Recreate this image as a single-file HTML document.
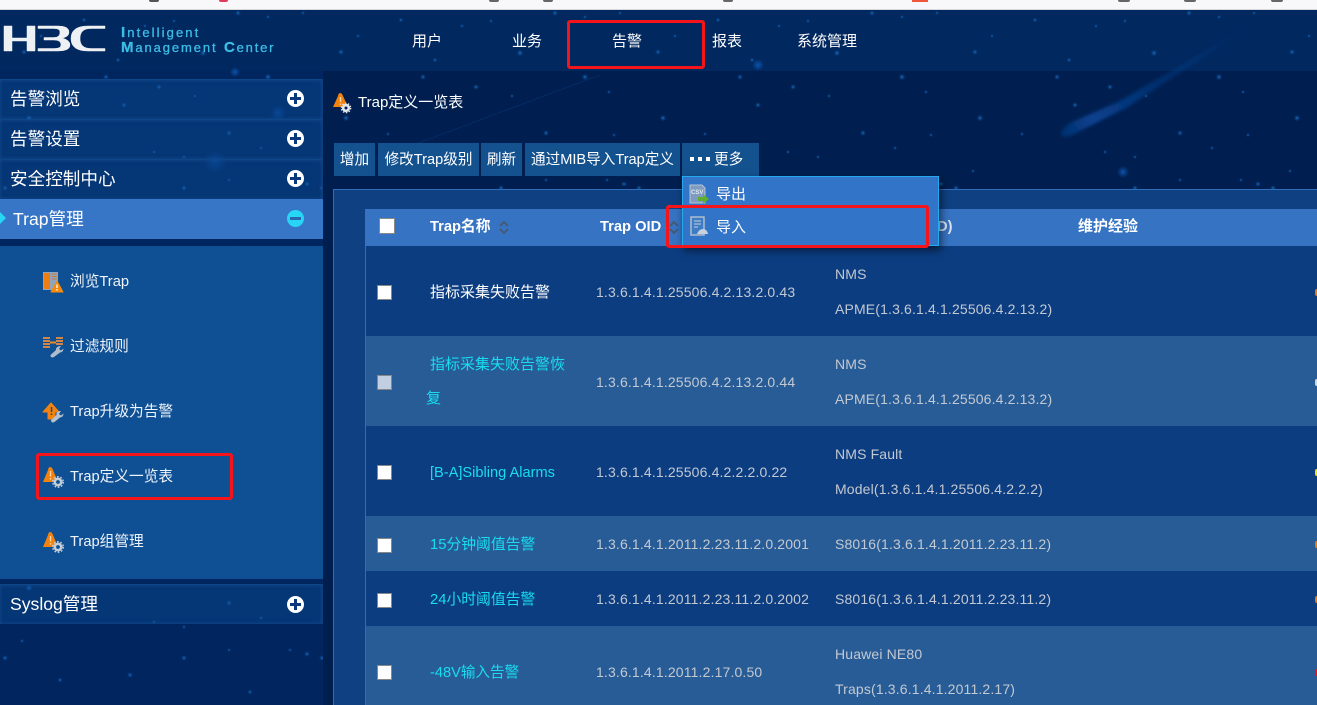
<!DOCTYPE html>
<html lang="zh"><head><meta charset="utf-8"><title>Trap定义一览表</title>
<style>
*{box-sizing:border-box}
html,body{margin:0;padding:0;width:1317px;height:705px;overflow:hidden;background:#001f50}
body{position:relative;font-family:"Liberation Sans","Noto Sans CJK SC",sans-serif;color:#fff}
.a{position:absolute}
.t{position:absolute;white-space:nowrap;line-height:20px}
.sec{position:absolute;left:0;width:323px;height:40px;background:rgba(15,85,160,.34);border-top:1px solid #0d4689;border-right:1px solid #0b3f80;box-shadow:inset 0 0 4px rgba(50,120,200,.3)}
.sec span{position:absolute;left:10px;top:9px;font-size:17.6px;line-height:20px;color:#fff}
.pm{position:absolute;left:287px;width:17px;height:17px;border-radius:50%;background:#fff}
.pm:before{content:"";position:absolute;left:3px;top:7px;width:11px;height:3px;background:#0b3a7c}
.pm:after{content:"";position:absolute;left:7px;top:3px;width:3px;height:11px;background:#0b3a7c}
.nav{position:absolute;top:32px;font-size:15px;line-height:20px;color:#fff;margin-top:-1px;padding-top:1px}
.sub{position:absolute;left:70px;font-size:14.7px;line-height:20px;color:#eef4fb;white-space:nowrap}
.ic{position:absolute;left:42px;width:22px;height:22px;overflow:visible}
.btn{position:absolute;top:143px;height:33px;background:#14528f;font-size:14.6px;line-height:35px;text-align:center;color:#fff;white-space:nowrap}
.row{position:absolute;left:365px;width:952px}
.d{background:#0c3d80}.l{background:#285c96}
.cb{position:absolute;left:12px;width:15px;height:15px;background:#fff;border:1px solid #888}
.c{position:absolute;font-size:14px;line-height:20px;white-space:nowrap}
.oid{left:231px;color:#c3c9d2;letter-spacing:.15px}
.dev{left:470px;color:#c3c9d2;letter-spacing:.15px}
.nm{left:65px;color:#19dcf0;font-size:14.8px}
.mark{position:absolute;left:950px;width:2px;height:7px;border-radius:2px 0 0 2px}
.rb{position:absolute;border:3px solid #f5141a;border-radius:3px}
.lg{position:absolute;white-space:nowrap;font-size:13px;line-height:16px;color:#3cbde6;-webkit-text-stroke:.3px #3cbde6}
</style></head><body>

<svg class="a" style="left:0;top:0" width="1317" height="705">
<defs>
<radialGradient id="g"><stop offset="0" stop-color="#2f8fe8" stop-opacity=".75"/><stop offset=".45" stop-color="#1469c0" stop-opacity=".35"/><stop offset="1" stop-color="#1469c0" stop-opacity="0"/></radialGradient>
<radialGradient id="gc"><stop offset="0" stop-color="#0f5fc0" stop-opacity=".8"/><stop offset="1" stop-color="#0f5fc0" stop-opacity="0"/></radialGradient>
<linearGradient id="m" gradientUnits="userSpaceOnUse" x1="1253" y1="23" x2="1063" y2="135"><stop offset="0" stop-color="#0b4aa0" stop-opacity="0"/><stop offset=".5" stop-color="#0b4aa0" stop-opacity=".35"/><stop offset=".85" stop-color="#0c50aa" stop-opacity=".7"/><stop offset="1" stop-color="#0c4a9e" stop-opacity=".4"/></linearGradient>
<filter id="bl" x="-10%" y="-20%" width="120%" height="140%"><feGaussianBlur stdDeviation="1.500"/></filter>
<pattern id="s" width="317" height="235" patternUnits="userSpaceOnUse">
<g fill="url(#g)">
<circle cx="24" cy="52" r="3"/><circle cx="84" cy="20" r="2.5"/><circle cx="41" cy="36" r="2"/><circle cx="118" cy="60" r="2.5"/><circle cx="145" cy="26" r="2"/><circle cx="174" cy="21" r="2"/><circle cx="238" cy="13" r="3"/><circle cx="203" cy="53" r="3.5"/><circle cx="268" cy="17" r="2"/><circle cx="303" cy="13" r="2"/><circle cx="106" cy="77" r="3"/><circle cx="159" cy="87" r="3"/><circle cx="29" cy="118" r="3.5"/><circle cx="71" cy="134" r="2"/><circle cx="124" cy="105" r="3"/><circle cx="195" cy="96" r="2"/><circle cx="229" cy="133" r="3"/><circle cx="268" cy="77" r="3.5"/><circle cx="292" cy="92" r="2"/><circle cx="261" cy="148" r="2"/><circle cx="297" cy="135" r="2"/><circle cx="154" cy="152" r="2"/><circle cx="184" cy="157" r="2"/><circle cx="22" cy="171" r="2"/><circle cx="229" cy="180" r="2"/><circle cx="290" cy="180" r="2"/><circle cx="5" cy="188" r="3"/><circle cx="184" cy="188" r="3"/><circle cx="307" cy="184" r="3"/><circle cx="60" cy="210" r="2.5"/><circle cx="130" cy="205" r="3"/><circle cx="250" cy="222" r="2.5"/>
</g></pattern>
</defs>
<rect x="0" y="10" width="1317" height="61" fill="#01285f"/>
<rect x="0" y="71" width="1317" height="634" fill="#001f50"/>
<rect x="0" y="71" width="323" height="634" fill="#01265f"/>
<rect x="0" y="10" width="1317" height="695" fill="url(#s)"/>
<circle cx="1123" cy="172" r="6" fill="url(#gc)"/><circle cx="758" cy="65" r="6" fill="url(#gc)"/><circle cx="235" cy="72" r="5" fill="url(#gc)"/><circle cx="215" cy="162" r="12" fill="url(#gc)" opacity=".5"/><circle cx="278" cy="113" r="8" fill="url(#gc)" opacity=".6"/>
<path d="M1061 134 Q1062 128 1072 122 L1120 101 L1203 52 L1253 23 L1206 56 L1126 108 L1080 131 Q1064 141 1061 134Z" fill="url(#m)" filter="url(#bl)"/>
<path d="M333 175 L600 75" stroke="#0a3c80" stroke-width="1" opacity=".4"/>
</svg>

<div class="a" style="left:0;top:0;width:1317px;height:10px;background:#f8f8fa;border-bottom:1px solid #d8d8dc"></div>
<div class="a" style="left:149px;top:0;width:10px;height:2px;background:#555;border-radius:0 0 5px 5px"></div>
<div class="a" style="left:219px;top:0;width:9px;height:2px;background:#e23a5c;border-radius:0 0 5px 5px"></div>
<div class="a" style="left:489px;top:0;width:10px;height:2px;background:#666;border-radius:0 0 5px 5px"></div>
<div class="a" style="left:543px;top:0;width:10px;height:2px;background:#666;border-radius:0 0 5px 5px"></div>
<div class="a" style="left:723px;top:0;width:10px;height:2px;background:#666;border-radius:0 0 5px 5px"></div>
<div class="a" style="left:912px;top:0;width:16px;height:2px;background:#f0563a"></div>
<div class="a" style="left:1118px;top:0;width:12px;height:2px;background:#666;border-radius:0 0 5px 5px"></div>
<div class="a" style="left:1184px;top:0;width:12px;height:2px;background:#666;border-radius:0 0 5px 5px"></div>
<div class="a" style="left:1271px;top:0;width:12px;height:2px;background:#666;border-radius:0 0 5px 5px"></div>

<!-- logo -->
<svg class="a" style="left:0;top:18px" width="110" height="40" fill="#eef1f4" stroke="#eef1f4" stroke-width=".5">
<path d="M4 8H12V20H27V8H35V33H27V23H12V33H4Z"/>
<path d="M38 8H58Q69 8 69 14Q69 19 62 20Q70 22 70 27Q70 33 58 33H38V30.500H54Q61 30.500 61 27Q61 22 54 22H44V19.500H54Q60 19.500 60 14Q60 10.500 54 10.500H38Z"/>
<path d="M105 8H88Q71 8 71 20.500Q71 33 88 33H105V30.500H91Q80 30.500 80 20.500Q80 10.500 91 10.500H105Z"/>
</svg>
<div class="lg" style="left:121px;top:25px;letter-spacing:2.1px"><b style="font-size:15px">I</b>ntelligent</div>
<div class="lg" style="left:121px;top:40px;letter-spacing:1.9px"><b style="font-size:15px">M</b>anagement</div>
<div class="lg" style="left:224px;top:40px;letter-spacing:1.8px"><b style="font-size:15px">C</b>enter</div>

<!-- nav -->
<div class="nav" style="left:412px">用户</div>
<div class="nav" style="left:512px">业务</div>
<div class="nav" style="left:612px">告警</div>
<div class="nav" style="left:712px">报表</div>
<div class="nav" style="left:797px">系统管理</div>
<div class="rb" style="left:567px;top:20px;width:138px;height:49px"></div>

<!-- sidebar -->
<div class="a" style="left:323px;top:71px;width:10px;height:634px;background:#001e4e"></div>
<div class="sec" style="top:79px"><span>告警浏览</span><i class="pm" style="top:10px"></i></div>
<div class="sec" style="top:119px"><span>告警设置</span><i class="pm" style="top:10px"></i></div>
<div class="sec" style="top:159px"><span>安全控制中心</span><i class="pm" style="top:10px"></i></div>
<div class="a" style="left:0;top:199px;width:323px;height:40px;background:#3776c7"></div>
<div class="a" style="left:0;top:212px;width:0;height:0;border-left:6px solid #25d7f5;border-top:6px solid transparent;border-bottom:6px solid transparent"></div>
<div class="t" style="left:13px;top:209px;font-size:17.6px">Trap管理</div>
<i class="a" style="left:287px;top:210px;width:17px;height:17px;border-radius:50%;background:#27d6f6"></i>
<i class="a" style="left:290px;top:217px;width:11px;height:3px;background:#2a68ae"></i>

<div class="a" style="left:0;top:246px;width:323px;height:333px;background:#0f4f94"></div>
<div class="sec" style="top:584px"><span>Syslog管理</span><i class="pm" style="top:11px"></i></div>

<svg class="ic" style="top:270px" viewBox="0 0 22 22"><path d="M1 2H16V20H1Z" fill="#8fa5bf"/><path d="M2 3H8V19H2Z" fill="#f07d12"/><path d="M9.500 4H15M9.500 6.500H15M9.500 9H15" stroke="#c9803e"/><path d="M15 11L21 22H9Z" fill="#f58a0c" stroke="#f58a0c" stroke-linejoin="round"/><path d="M15 14.500V18M15 19V20.500" stroke="#fff" stroke-width="1.300"/></svg>
<svg class="ic" style="top:335px" viewBox="0 0 22 22"><path d="M1 3H8M1 6H8M1 9H8M1 12H8M14 3H21M14 6H21M14 9H21" stroke="#cf8648" stroke-width="2"/><path d="M8 7.500H14" stroke="#f08a20" stroke-width="2"/><path d="M19 11L17 14L19 15.500L21.500 13.500Q21.500 17 18 17.500L12 22Q8.500 23.500 8.500 20L14 15Q14 11 19 11Z" fill="#aebccb"/></svg>
<svg class="ic" style="top:400px" viewBox="0 0 22 22"><path d="M9 3L17 12H13V19H6V12H1Z" fill="#f2820e" stroke="#f2820e" stroke-linejoin="round"/><path d="M9.500 7V12M9.500 13.500V15" stroke="#0f4f94" stroke-width="1.500"/><path d="M19 11L17 14L19 15.500L21.500 13.500Q21.500 17 18 17.500L12.500 22Q9 23.500 9 20L14.500 15Q14 11 19 11Z" fill="#b4c1cf"/></svg>
<svg class="ic" style="top:465px" viewBox="0 0 22 22"><path d="M8 2Q10 2 11 5L16 17H1L6 5Q6.500 2 8 2Z" fill="#f2820e"/><path d="M8.500 6V11.500M8.500 13V14.500" stroke="#ffd9a8" stroke-width="1.300"/><circle cx="16" cy="17" r="3.200" fill="#0f4f94" stroke="#c3ced9" stroke-width="2.600"/><circle cx="16" cy="17" r="5.300" fill="none" stroke="#c3ced9" stroke-width="1.400" stroke-dasharray="1.700 1.700"/></svg>
<svg class="ic" style="top:530px" viewBox="0 0 22 22"><path d="M8 2Q10 2 11 5L16 17H1L6 5Q6.500 2 8 2Z" fill="#f2820e"/><path d="M8.500 6V11.500M8.500 13V14.500" stroke="#ffd9a8" stroke-width="1.300"/><circle cx="16" cy="17" r="3.200" fill="#0f4f94" stroke="#c3ced9" stroke-width="2.600"/><circle cx="16" cy="17" r="5.300" fill="none" stroke="#c3ced9" stroke-width="1.400" stroke-dasharray="1.700 1.700"/></svg>
<div class="sub" style="top:272px">浏览Trap</div>
<div class="sub" style="top:337px">过滤规则</div>
<div class="sub" style="top:402px">Trap升级为告警</div>
<div class="sub" style="top:467px">Trap定义一览表</div>
<div class="sub" style="top:532px">Trap组管理</div>
<div class="rb" style="left:36px;top:453px;width:197px;height:47px"></div>

<!-- title -->
<svg class="a" style="left:332px;top:92px;overflow:visible" width="22" height="22" viewBox="0 0 22 22"><path d="M8 1Q10 1 11 4L16 15H1L6 4Q6.500 1 8 1Z" fill="#f2820e"/><path d="M8.500 5V10M8.500 11.500V13" stroke="#ffd9a8" stroke-width="1.300"/><circle cx="14" cy="16" r="2.800" fill="#012050" stroke="#e3e8ee" stroke-width="2.600"/><circle cx="14" cy="16" r="4.700" fill="none" stroke="#e3e8ee" stroke-width="1.300" stroke-dasharray="1.500 1.500"/></svg>
<div class="t" style="left:358px;top:93px;font-size:15px">Trap定义一览表</div>

<!-- buttons -->
<div class="btn" style="left:334px;width:41px">增加</div>
<div class="btn" style="left:378px;width:101px">修改Trap级别</div>
<div class="btn" style="left:481px;width:41px">刷新</div>
<div class="btn" style="left:525px;width:155px">通过MIB导入Trap定义</div>
<div class="btn" style="left:682px;width:77px;text-align:left;padding-left:32px">更多</div>
<i class="a" style="left:690px;top:157px;width:4px;height:4px;background:#fff"></i><i class="a" style="left:698px;top:157px;width:4px;height:4px;background:#fff"></i><i class="a" style="left:706px;top:157px;width:4px;height:4px;background:#fff"></i>

<!-- container + table -->
<div class="a" style="left:333px;top:189px;width:984px;height:516px;background:#0f4182;border-top:1px solid #2e6fbd;border-left:1px solid #2e6fbd"></div>
<div class="a" style="left:365px;top:246px;width:1px;height:459px;background:#2e6fbd;z-index:2"></div>
<div class="row" style="top:209px;height:37px;background:#3673c2">
<i class="cb" style="left:14px;top:9px;width:16px;height:16px"></i>
<b class="c" style="left:65px;top:8px;font-size:14.7px">Trap名称</b>
<svg class="a" style="left:134px;top:11px" width="10" height="15" fill="none" stroke="#47586f" stroke-width="1.800"><path d="M1 6L5 2L9 6M1 9L5 13L9 9"/></svg>
<b class="c" style="left:235px;top:8px;font-size:14.7px">Trap OID</b>
<svg class="a" style="left:304px;top:11px" width="10" height="15" fill="none" stroke="#47586f" stroke-width="1.800"><path d="M1 6L5 2L9 6M1 9L5 13L9 9"/></svg>
<b class="c" style="left:713px;top:8px;font-size:15px">维护经验</b>
<b class="c" style="left:572px;top:8px;font-size:14.7px;color:#d8e2ee">D)</b>
</div>

<div class="row d" style="top:246px;height:90px"><i class="cb" style="top:39px"></i>
<div class="c" style="left:65px;top:37px;color:#fff;font-size:15px">指标采集失败告警</div>
<div class="c oid" style="top:36px">1.3.6.1.4.1.25506.4.2.13.2.0.43</div>
<div class="c dev" style="top:18px">NMS</div><div class="c dev" style="top:53px">APME(1.3.6.1.4.1.25506.4.2.13.2)</div>
<i class="mark" style="top:43px;background:#e8780c"></i></div>

<div class="row l" style="top:336px;height:90px"><i class="cb" style="top:39px;background:#c2cfe2"></i>
<div class="c nm" style="top:19px;font-size:15px">指标采集失败告警恢</div><div class="c nm" style="left:61px;top:53px;font-size:15px">复</div>
<div class="c oid" style="top:36px">1.3.6.1.4.1.25506.4.2.13.2.0.44</div>
<div class="c dev" style="top:18px">NMS</div><div class="c dev" style="top:53px">APME(1.3.6.1.4.1.25506.4.2.13.2)</div>
<i class="mark" style="top:43px;background:#d0d8e2"></i></div>

<div class="row d" style="top:426px;height:90px"><i class="cb" style="top:39px"></i>
<div class="c nm" style="top:37px;font-size:14.6px">[B-A]Sibling Alarms</div>
<div class="c oid" style="top:36px">1.3.6.1.4.1.25506.4.2.2.2.0.22</div>
<div class="c dev" style="top:18px">NMS Fault</div><div class="c dev" style="top:53px">Model(1.3.6.1.4.1.25506.4.2.2.2)</div>
<i class="mark" style="top:43px;background:#e8e800"></i></div>

<div class="row l" style="top:516px;height:55px"><i class="cb" style="top:22px"></i>
<div class="c nm" style="top:19px">15分钟阈值告警</div>
<div class="c oid" style="top:18px">1.3.6.1.4.1.2011.2.23.11.2.0.2001</div>
<div class="c dev" style="top:18px">S8016(1.3.6.1.4.1.2011.2.23.11.2)</div>
<i class="mark" style="top:25px;background:#e8780c"></i></div>

<div class="row d" style="top:571px;height:55px"><i class="cb" style="top:22px"></i>
<div class="c nm" style="top:19px">24小时阈值告警</div>
<div class="c oid" style="top:18px">1.3.6.1.4.1.2011.2.23.11.2.0.2002</div>
<div class="c dev" style="top:18px">S8016(1.3.6.1.4.1.2011.2.23.11.2)</div>
<i class="mark" style="top:25px;background:#e8780c"></i></div>

<div class="row l" style="top:626px;height:79px;overflow:hidden"><i class="cb" style="top:39px"></i>
<div class="c nm" style="top:37px;font-size:14.6px">-48V输入告警</div>
<div class="c oid" style="top:36px">1.3.6.1.4.1.2011.2.17.0.50</div>
<div class="c dev" style="top:18px">Huawei NE80</div><div class="c dev" style="top:53px">Traps(1.3.6.1.4.1.2011.2.17)</div>
<i class="mark" style="top:43px;background:#f01010"></i></div>

<!-- dropdown -->
<div class="a" style="left:682px;top:176px;width:257px;height:70px;background:#3174c8;border:1px solid #24a8ee;box-shadow:2px 4px 8px rgba(0,0,0,.6);z-index:3"></div>
<svg class="a" style="left:689px;top:184px;z-index:4" width="21" height="20" viewBox="0 0 21 20"><path d="M1 1H13L16 4V19H1Z" fill="#7f9cc0" stroke="#b4c4d6"/><text x="2" y="10" font-family="Liberation Sans,sans-serif" font-size="6" font-weight="700" fill="#dfe7f0">CSV</text><path d="M9 13H14V10L20 15L14 20V17H9Z" fill="#5fae2f"/></svg>
<div class="t" style="left:716px;top:185px;font-size:15px;z-index:4">导出</div>
<svg class="a" style="left:689px;top:216px;z-index:4" width="20" height="20" viewBox="0 0 20 20" fill="none"><path d="M2 1H15V19H2Z" fill="#3f7cc6" stroke="#aebdce" stroke-width="1.500"/><path d="M5 5H12M5 8H12M5 11H9" stroke="#c5d0dc"/><path d="M8 18Q10 13 14 13Q18 13 19 18Z" fill="#c7d2de"/></svg>
<div class="t" style="left:716px;top:218px;font-size:15px;z-index:4">导入</div>
<div class="rb" style="left:666px;top:205px;width:263px;height:43px;z-index:5"></div>
</body></html>
